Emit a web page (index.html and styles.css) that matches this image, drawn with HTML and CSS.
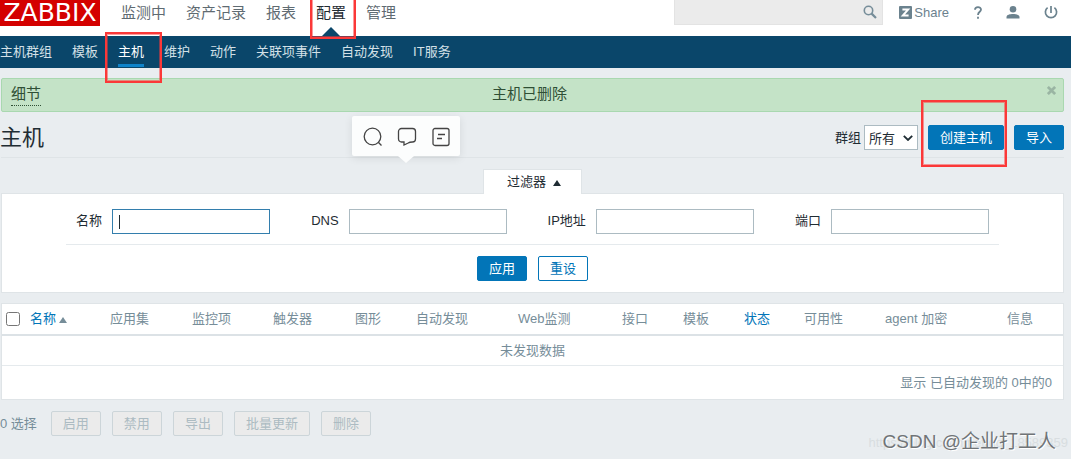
FILE: index.html
```html
<!DOCTYPE html>
<html lang="zh-CN">
<head>
<meta charset="utf-8">
<title>主机</title>
<link rel="stylesheet" href="styles.css">
</head>
<body>
<div class="page">
  <header class="header">
    <a class="logo" href="#" aria-label="ZABBIX">ZABBIX</a>
    <nav class="main-nav">
      <a href="#">监测中</a>
      <a href="#">资产记录</a>
      <a href="#">报表</a>
      <a href="#" class="current">配置</a>
      <a href="#">管理</a>
    </nav>
    <form class="search">
      <input class="search-input" type="text" aria-label="搜索">
      <button class="search-button" type="button" aria-label="搜索">
        <svg width="14" height="14" viewBox="0 0 14 14" fill="none" stroke="#768d99"><circle cx="5.5" cy="5.5" r="4.2" stroke-width="1.6"/><path d="M8.6 8.6 13 13" stroke-width="2.2"/></svg>
      </button>
    </form>
    <div class="tools">
      <a class="share" href="#"><svg width="13" height="13" viewBox="0 0 13 13"><rect width="13" height="13" rx="1" fill="#6b828e"/><path d="M3.4 3.5h5.8L3.8 9.5h5.8" fill="none" stroke="#fff" stroke-width="1.9"/></svg>Share</a>
      <a href="#" aria-label="帮助"><svg width="8" height="13" viewBox="0 0 8 13" fill="none" stroke="#6b828e" stroke-width="1.8"><path d="M1 3.8C1 .2 7 .2 7 3.6 7 5.900 4 5.800 4 9"/><path d="M4 10.800v2"/></svg></a>
      <a href="#" aria-label="用户"><svg width="14" height="13" viewBox="0 0 14 13" fill="#6b828e"><circle cx="7" cy="3.300" r="3.300"/><path d="M.5 12.500V11C.5 8.800 4 8 7 8s6.500.8 6.500 3v1.500z"/></svg></a>
      <a href="#" aria-label="退出"><svg width="14" height="13" viewBox="0 0 14 13" fill="none" stroke="#6b828e" stroke-width="1.700"><path d="M7 0v7M3.600 1.600a5.600 5.600 0 1 0 6.800 0"/></svg></a>
    </div>
  </header>

  <nav class="sub-nav">
    <a href="#">主机群组</a>
    <a href="#">模板</a>
    <a href="#" class="selected">主机</a>
    <a href="#">维护</a>
    <a href="#">动作</a>
    <a href="#">关联项事件</a>
    <a href="#">自动发现</a>
    <a href="#">IT服务</a>
  </nav>

  <main class="content">
    <div class="message">
      <a class="details" href="#">细节</a>
      <span class="message-text">主机已删除</span>
      <button class="close" type="button" aria-label="关闭"><svg width="9" height="9" viewBox="0 0 8 8" stroke="#9ab5a3" stroke-width="2.400"><path d="m.8.8 6.400 6.400M7.200.8.8 7.200"/></svg></button>
    </div>

    <div class="title-bar">
      <h1>主机</h1>
      <form class="title-actions">
        <label for="group">群组</label>
        <span class="select-box">
          <select id="group"><option>所有</option></select>
          <svg width="10" height="6" viewBox="0 0 10 6" fill="none" stroke="#1f2c33" stroke-width="1.800"><path d="m.8.8 4.200 4.200L9.200.8"/></svg>
        </span>
        <button class="btn create" type="button">创建主机</button>
        <button class="btn" type="button">导入</button>
      </form>
    </div>

    <div class="quick-tools">
      <button type="button" aria-label="搜索"><svg width="20" height="20" viewBox="0 0 20 20"><circle cx="9.500" cy="9.500" r="8.300"/><path d="m15.300 15.300 3.200 3.200"/></svg></button>
      <button type="button" aria-label="评论"><svg width="20" height="20" viewBox="0 0 20 20"><path d="M4.500 1.500h11a3 3 0 0 1 3 3V12a3 3 0 0 1-3 3q-3 0-4.300 1L7 18v-3H4.500a3 3 0 0 1-3-3V4.500a3 3 0 0 1 3-3z"/></svg></button>
      <button type="button" aria-label="笔记"><svg width="20" height="20" viewBox="0 0 20 20"><rect x="2" y="1.500" width="16" height="17" rx="2"/><path d="M7 7.500h7M6 11.500h5"/></svg></button>
    </div>

    <section class="filter">
      <button class="filter-tab" type="button">过滤器<span class="triangle"></span></button>
      <form class="filter-panel">
        <div class="fields">
          <div class="field"><label for="f-name">名称</label><input class="active" id="f-name" type="text"></div>
          <div class="field"><label for="f-dns">DNS</label><input id="f-dns" type="text"></div>
          <div class="field"><label for="f-ip">IP地址</label><input id="f-ip" type="text"></div>
          <div class="field"><label for="f-port">端口</label><input id="f-port" type="text"></div>
        </div>
        <div class="filter-buttons">
          <button class="btn" type="button">应用</button>
          <button class="btn outline" type="button">重设</button>
        </div>
      </form>
    </section>

    <table class="hosts">
      <colgroup>
        <col class="w-check"><col class="w-80"><col class="w-82"><col class="w-81"><col class="w-82"><col class="w-61"><col class="w-102"><col class="w-104"><col class="w-61"><col class="w-61"><col class="w-60"><col class="w-81"><col class="w-122"><col class="w-61">
      </colgroup>
      <thead>
        <tr>
          <th><input type="checkbox" aria-label="全选"></th>
          <th><a href="#">名称<span class="triangle"></span></a></th>
          <th>应用集</th>
          <th>监控项</th>
          <th>触发器</th>
          <th>图形</th>
          <th>自动发现</th>
          <th>Web监测</th>
          <th>接口</th>
          <th>模板</th>
          <th><a href="#">状态</a></th>
          <th>可用性</th>
          <th>agent 加密</th>
          <th>信息</th>
        </tr>
      </thead>
      <tbody>
        <tr><td class="empty" colspan="14">未发现数据</td></tr>
        <tr><td class="stats" colspan="14">显示 已自动发现的 0中的0</td></tr>
      </tbody>
    </table>

    <div class="bulk">
      <span class="count">0 选择</span>
      <button class="btn" type="button" disabled>启用</button>
      <button class="btn" type="button" disabled>禁用</button>
      <button class="btn" type="button" disabled>导出</button>
      <button class="btn" type="button" disabled>批量更新</button>
      <button class="btn" type="button" disabled>删除</button>
    </div>
  </main>
  <div class="watermark-url">https://blog.csdn.net/qq_18589359</div>
  <div class="watermark">CSDN @企业打工人</div>
</div>
</body>
</html>
```
FILE: styles.css
```css
* { box-sizing: border-box; }
body {
  margin: 0;
  background: #fff;
  color: #1f2c33;
  font: 13px/18px "Liberation Sans", "Noto Sans CJK SC", sans-serif;
}
a { color: inherit; text-decoration: none; }
button, input, select { font: inherit; margin: 0; }
.page { position: relative; background: #e9edf0; padding-bottom: 23px; }

.header { display: flex; height: 36px; background: #fff; }
.logo {
  width: 100px;
  height: 26px;
  background: #d40000;
  color: #fff;
  font: 25px/26px "DejaVu Sans", sans-serif;
  text-align: center;
}
.main-nav { display: flex; gap: 20px; margin-left: 21px; font-size: 15px; line-height: 25px; color: #5f6b72; }
.main-nav a { position: relative; }
.main-nav .current { color: #1f2c33; }
.main-nav .current::before {
  content: "";
  position: absolute;
  left: 6px;
  bottom: 0;
  border: 9px solid transparent;
  border-top: 0;
  border-bottom-color: #0a466a;
}
.main-nav .current::after,
.sub-nav .selected::after,
.create::after {
  content: "";
  position: absolute;
  z-index: 2;
  border: 2px solid #fb3838;
  box-shadow: inset 0 0 0 1px #fb383880;
}
.main-nav .current::after { inset: -4px -10px -3px -6px; }
.search {
  display: flex;
  width: 209px;
  height: 25px;
  margin-left: auto;
  background: #ebebeb;
  border: 1px solid #e3e3e3;
  border-top: 0;
}
.search-input { flex: 1; min-width: 0; border: 0; background: none; outline: 0; }
.search-button { width: 24px; padding: 0; border: 0; background: none; line-height: 0; }
.tools { display: flex; align-items: center; height: 25px; margin: 0 13px 0 16px; gap: 24px; color: #6b828e; }
.tools a { display: flex; gap: 2px; align-items: center; }
.tools .share { margin-right: 1px; }

.sub-nav { display: flex; gap: 20px; height: 32px; background: #0a466a; color: #d3e0e7; line-height: 31px; }
.sub-nav a { position: relative; }
.sub-nav .selected { color: #fff; }
.sub-nav .selected::before {
  content: "";
  position: absolute;
  left: 0;
  right: 0;
  bottom: 1px;
  height: 3px;
  background: #0f83c9;
}
.sub-nav .selected::after { inset: -4px -18px -15px -13px; }

.content { padding: 10px 7px 0 1px; }
.message {
  display: grid;
  grid-template-columns: 1fr auto 1fr;
  height: 34px;
  padding: 4px 7px 0 9px;
  border: 1px solid #a9d8b0;
  border-radius: 2px;
  background: #c4e3c7;
  color: #2f4f35;
  font-size: 15px;
  line-height: 22px;
}
.message-text { margin-right: 8px; }
.details { justify-self: start; height: 23px; border-bottom: 1px dotted #2f4f35; }
.close { justify-self: end; align-self: start; padding: 3px 0; border: 0; background: none; line-height: 0; }

.title-bar {
  display: flex;
  justify-content: space-between;
  height: 46px;
  padding-top: 13px;
  border-bottom: 1px solid #dfe4e7;
}
h1 { margin: 0 0 0 -1px; font-size: 22px; font-weight: 400; line-height: 26px; }
.title-actions { display: flex; align-items: flex-start; line-height: 25px; }
.select-box { position: relative; margin: 0 10px 0 3px; }
.select-box select {
  display: block;
  appearance: none;
  width: 54px;
  height: 25px;
  padding: 0 4px;
  border: 1px solid #acbbc2;
  border-radius: 0;
  background: #fff;
  color: #1f2c33;
}
.select-box svg { position: absolute; right: 5px; top: 10px; pointer-events: none; }
.btn {
  position: relative;
  height: 25px;
  padding: 0 11px;
  border: 1px solid #0275b8;
  border-radius: 2px;
  background: #0275b8;
  color: #fff;
  line-height: 22px;
}
.title-actions .btn + .btn { margin-left: 10px; }
.create::after { inset: -26px -4px -18px -8px; }
.btn.outline { background: #fff; color: #0275b8; }
.btn:disabled { background: #ebebeb; border-color: #ccd5d9; color: #acbbc2; }

.quick-tools {
  position: absolute;
  left: 352px;
  top: 116px;
  display: flex;
  justify-content: space-between;
  align-items: center;
  width: 108px;
  height: 40px;
  padding: 2px 9px 0 11px;
  border-radius: 2px;
  background: #fcfdfd;
  box-shadow: 0 2px 8px #00000018;
}
.quick-tools::after {
  content: "";
  position: absolute;
  top: 100%;
  left: 46px;
  border: 8px solid transparent;
  border-top: 7px solid #fcfdfd;
  border-bottom: 0;
}
.quick-tools button { padding: 0; border: 0; background: none; line-height: 0; }
.quick-tools svg { fill: none; stroke: #444; stroke-width: 1.3; }

.filter { display: flex; flex-direction: column; align-items: center; padding-top: 11px; }
.filter-tab {
  width: 99px;
  height: 25px;
  margin-bottom: -1px;
  padding: 0 0 0 3px;
  border: 1px solid #dfe4e7;
  border-bottom: 0;
  background: #fff;
  color: #1f2c33;
  z-index: 1;
}
.triangle {
  display: inline-block;
  margin-left: 7px;
  border: 4px solid transparent;
  border-top: 0;
  border-bottom: 6px solid;
}
.filter-panel {
  width: 100%;
  height: 100px;
  border: 1px solid #dfe4e7;
  background: #fff;
  display: flex;
  flex-direction: column;
  align-items: center;
}
.fields { display: flex; gap: 41px; padding: 15px 10px 10px; border-bottom: 1px solid #e5eaed; }
.field { display: flex; gap: 10px; line-height: 24px; }
.field input {
  width: 158px;
  height: 25px;
  padding: 0 5px;
  border: 1px solid #acbbc2;
  background: #fff;
  outline: 0;
}
.field .active {
  border-color: #337ead;
  background: linear-gradient(#1f2c33, #1f2c33) 6px 5px / 1px 14px no-repeat #fff;
}
.filter-buttons { display: flex; gap: 11px; padding-top: 11px; }

.hosts {
  width: 100%;
  margin-top: 10px;
  table-layout: fixed;
  border-collapse: separate;
  border-spacing: 0;
  border: 1px solid #dfe4e7;
  background: #fff;
  color: #768d99;
}
.hosts th {
  height: 32px;
  padding: 0 0 0 5px;
  border-bottom: 2px solid #dce2e6;
  font-weight: 400;
  text-align: left;
  white-space: nowrap;
}
.hosts th:first-child { padding-left: 4px; }
.hosts th a { color: #0275b8; }
.hosts .triangle { margin-left: 3px; color: #768d99; }
.hosts input { display: block; width: 14px; height: 14px; margin: 0; }
.hosts td { padding: 0 11px; }
.hosts .empty { height: 30px; border-bottom: 1px solid #e5eaed; text-align: center; }
.hosts .stats { height: 33px; text-align: right; }
.w-check { width: 23px; }
.w-60 { width: 60px; }
.w-61 { width: 61px; }
.w-80 { width: 80px; }
.w-81 { width: 81px; }
.w-82 { width: 82px; }
.w-102 { width: 102px; }
.w-104 { width: 104px; }
.w-122 { width: 122px; }

.bulk { display: flex; gap: 11px; margin: 11px 0 0 -1px; color: #768d99; line-height: 25px; }
.count { margin-right: 3px; }

.watermark, .watermark-url { position: absolute; white-space: nowrap; }
.watermark {
  right: 15px;
  bottom: 4px;
  color: #707477;
  font-size: 19px;
  line-height: 26px;
  text-shadow: 1px 1px 0 #fff;
}
.watermark-url { right: 3px; bottom: 7px; color: #d8dde0; font-size: 13px; }
```
